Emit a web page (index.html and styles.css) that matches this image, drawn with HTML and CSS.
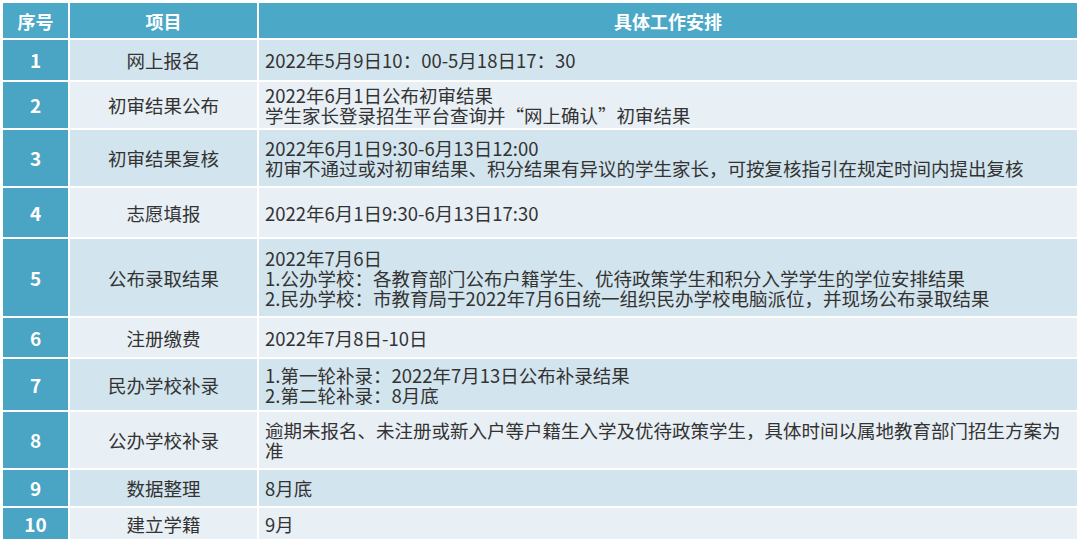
FILE: index.html
```html
<!DOCTYPE html>
<html lang="zh-CN">
<head>
<meta charset="utf-8">
<title>招生工作安排</title>
<link rel="stylesheet" href="styles.css">
</head>
<body>
<table class="sched">
  <colgroup>
    <col class="c-no">
    <col class="c-item">
    <col class="c-detail">
  </colgroup>
  <thead>
    <tr class="head">
      <th>序号</th>
      <th>项目</th>
      <th>具体工作安排</th>
    </tr>
  </thead>
  <tbody>
    <tr class="odd h40">
      <td class="no">1</td>
      <td class="item">网上报名</td>
      <td class="detail">2022年5月9日10：00-5月18日17：30</td>
    </tr>
    <tr class="even h46">
      <td class="no">2</td>
      <td class="item">初审结果公布</td>
      <td class="detail">2022年6月1日公布初审结果<br>学生家长登录招生平台查询并“网上确认”初审结果</td>
    </tr>
    <tr class="odd h56">
      <td class="no">3</td>
      <td class="item">初审结果复核</td>
      <td class="detail">2022年6月1日9:30-6月13日12:00<br>初审不通过或对初审结果、积分结果有异议的学生家长，可按复核指引在规定时间内提出复核</td>
    </tr>
    <tr class="even h49">
      <td class="no">4</td>
      <td class="item">志愿填报</td>
      <td class="detail">2022年6月1日9:30-6月13日17:30</td>
    </tr>
    <tr class="odd h77">
      <td class="no">5</td>
      <td class="item">公布录取结果</td>
      <td class="detail">2022年7月6日<br>1.公办学校：各教育部门公布户籍学生、优待政策学生和积分入学学生的学位安排结果<br>2.民办学校：市教育局于2022年7月6日统一组织民办学校电脑派位，并现场公布录取结果</td>
    </tr>
    <tr class="even h39">
      <td class="no">6</td>
      <td class="item">注册缴费</td>
      <td class="detail">2022年7月8日-10日</td>
    </tr>
    <tr class="odd h51">
      <td class="no">7</td>
      <td class="item">民办学校补录</td>
      <td class="detail">1.第一轮补录：2022年7月13日公布补录结果<br>2.第二轮补录：8月底</td>
    </tr>
    <tr class="even h56">
      <td class="no">8</td>
      <td class="item">公办学校补录</td>
      <td class="detail">逾期未报名、未注册或新入户等户籍生入学及优待政策学生，具体时间以属地教育部门招生方案为<br>准</td>
    </tr>
    <tr class="odd h36">
      <td class="no">9</td>
      <td class="item">数据整理</td>
      <td class="detail">8月底</td>
    </tr>
    <tr class="even h31">
      <td class="no">10</td>
      <td class="item">建立学籍</td>
      <td class="detail">9月</td>
    </tr>
  </tbody>
</table>
</body>
</html>
```

FILE: styles.css
```css
html, body {
  margin: 0;
  padding: 0;
  background: #ffffff;
}

body {
  font-family: "Noto Sans CJK SC", "Noto Sans", sans-serif;
  color: #333333;
}

.sched {
  margin: 1px 0 0 1px;
  width: 1078px;
  table-layout: fixed;
  border-collapse: separate;
  border-spacing: 2px;
}

.c-no { width: 65px; }
.c-item { width: 187px; }
.c-detail { width: 818px; }

.sched th,
.sched td {
  padding: 0;
  font-size: 18.5px;
  line-height: 20px;
  vertical-align: middle;
}

.head th {
  height: 35px;
  background: #4ba8c7;
  color: #ffffff;
  font-weight: 700;
  text-align: center;
  font-size: 18px;
}

.h40 td { height: 40px; }
.h46 td { height: 46px; }
.h56 td { height: 56px; }
.h49 td { height: 49px; }
.h77 td { height: 77px; }
.h39 td { height: 39px; }
.h51 td { height: 51px; }
.h36 td { height: 36px; }
.h31 td { height: 31px; }

.odd td { background: #d2e4ed; }
.even td { background: #e8eff5; }

.sched td.no {
  background: #4aa4c3;
  color: #ffffff;
  font-weight: 700;
  text-align: center;
  font-size: 19px;
}

.item {
  text-align: center;
}

.detail {
  text-align: left;
  padding-left: 6px !important;
  white-space: nowrap;
}
```
